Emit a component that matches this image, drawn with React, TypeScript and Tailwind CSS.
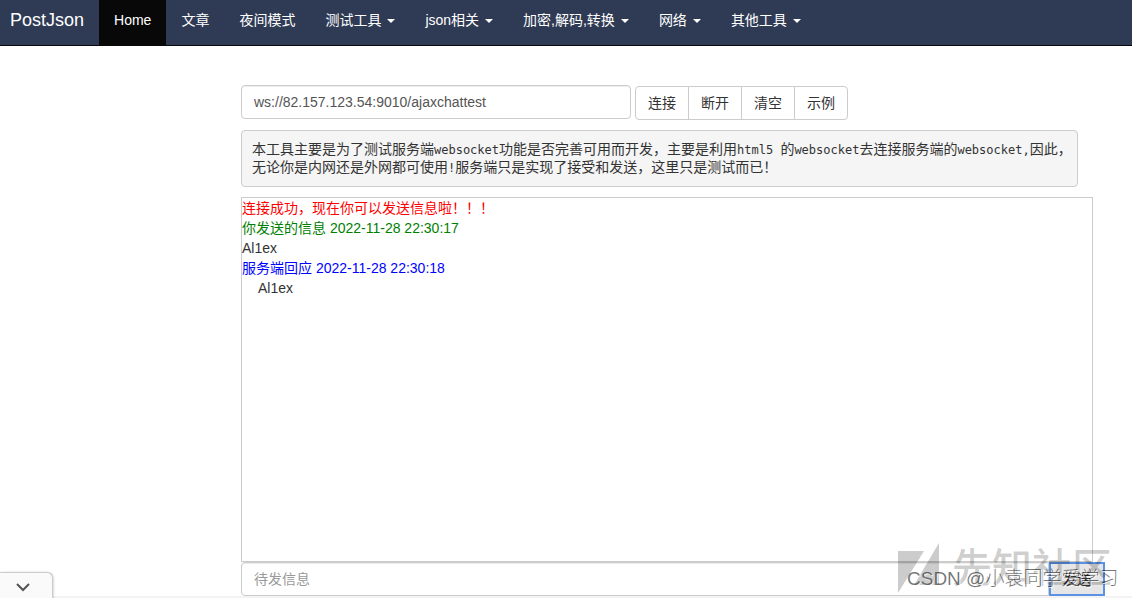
import { useState } from "react";

const MENU = [
  { label: "Home", active: true },
  { label: "文章" },
  { label: "夜间模式" },
  { label: "测试工具", caret: true },
  { label: "json相关", caret: true },
  { label: "加密,解码,转换", caret: true },
  { label: "网络", caret: true },
  { label: "其他工具", caret: true },
];

const ACTIONS = ["连接", "断开", "清空", "示例"];

const INTRO = [
  "本工具主要是为了测试服务端websocket功能是否完善可用而开发，主要是利用html5 的websocket去连接服务端的websocket,因此，",
  "无论你是内网还是外网都可使用!服务端只是实现了接受和发送，这里只是测试而已！",
];

function Navbar() {
  return (
    <nav className="flex h-[46px] items-stretch border-b border-[#080808] bg-[#2f3b54] text-white">
      <a href="#" className="pt-[10px] pr-[15px] pl-[10px] text-lg leading-5">
        PostJson
      </a>
      <ul className="flex">
        {MENU.map((item) => (
          <li key={item.label}>
            <a
              href="#"
              className={
                item.active
                  ? "flex h-full bg-[#080808] px-[15px] pt-[10px] leading-5"
                  : "flex h-full px-[15px] pt-[10px] leading-5"
              }
            >
              {item.label}
              {item.caret && (
                <span className="mt-[9px] ml-[6px] h-0 w-0 border-x-4 border-t-4 border-x-transparent border-t-white" />
              )}
            </a>
          </li>
        ))}
      </ul>
    </nav>
  );
}

// Latin words are set smaller so that two letters take one CJK cell
function Mono({ text }: { text: string }) {
  return (
    <>
      {text.split(/([\x20-\x7e]+)/).map((part, i) =>
        i % 2 ? (
          <span key={i} className="text-xs">
            {part}
          </span>
        ) : (
          part
        )
      )}
    </>
  );
}

function Watermark() {
  return (
    <div className="pointer-events-none absolute right-[13px] bottom-0 h-[56px] w-[222px]" aria-hidden="true">
      <div className="absolute top-0 left-0 flex items-start text-black/20">
        <svg width="43" height="52" viewBox="0 0 43 52" fill="currentColor">
          <path d="M1 9H27L1 51Z" />
          <path d="M42 1V43H17Z" />
        </svg>
        <span className="ml-3 text-[40px] leading-[52px] font-medium">先知社区</span>
      </div>
      <p className="absolute top-[25px] left-[10px] text-[19px] leading-6 font-light whitespace-nowrap text-black/55 [text-shadow:1px_1px_0_rgba(255,255,255,0.8)]">
        CSDN @小袁同学爱学习
      </p>
    </div>
  );
}

export default function App() {
  const [url, setUrl] = useState("ws://82.157.123.54:9010/ajaxchattest");
  const [message, setMessage] = useState("");

  return (
    <div className="relative flex min-h-screen flex-col bg-white font-['Liberation_Sans','Noto_Sans_CJK_SC',sans-serif] text-sm leading-5 text-[#333333]">
      <Navbar />

      <main className="flex flex-1 flex-col pt-[39px] pr-[39px] pb-[2px] pl-[241px]">
        <div className="flex h-[35px] gap-1">
          <input
            type="text"
            aria-label="WebSocket"
            value={url}
            onChange={(e) => setUrl(e.target.value)}
            className="h-[34px] w-[390px] rounded border border-[#cccccc] px-3 text-[#555555] shadow-[inset_0_1px_1px_rgba(0,0,0,0.075)]"
          />
          <div className="flex self-end">
            {ACTIONS.map((label) => (
              <button
                key={label}
                type="button"
                className="-ml-px h-[34px] border border-[#cccccc] bg-white px-3 first:ml-0 first:rounded-l last:rounded-r"
              >
                {label}
              </button>
            ))}
          </div>
        </div>

        <div className="mt-[10px] mr-[15px] rounded border border-[#cccccc] bg-[#f5f5f5] px-[10px] pt-[9px] pb-[10px] font-['DejaVu_Sans_Mono','Noto_Sans_CJK_SC',monospace] leading-[18px]">
          {INTRO.map((line) => (
            <p key={line} className="whitespace-nowrap">
              <Mono text={line} />
            </p>
          ))}
        </div>

        <div className="mt-[10px] flex-1 border border-[#cccccc]">
          <p className="text-[#ff0000]">连接成功，现在你可以发送信息啦！！！</p>
          <p className="text-[#008000]">你发送的信息 2022-11-28 22:30:17</p>
          <p>Al1ex</p>
          <p className="text-[#0000ff]">服务端回应 2022-11-28 22:30:18</p>
          <p className="pl-4">Al1ex</p>
        </div>

        <form className="-mr-3 flex" onSubmit={(e) => e.preventDefault()}>
          <input
            type="text"
            aria-label="待发信息"
            placeholder="待发信息"
            value={message}
            onChange={(e) => setMessage(e.target.value)}
            className="h-[34px] min-w-0 flex-1 rounded-l border border-[#cccccc] px-3 placeholder:text-[#999999] shadow-[inset_0_1px_1px_rgba(0,0,0,0.075)]"
          />
          <button type="submit" className="h-[34px] w-14 border-2 border-[#5b92e5] bg-[#e6e6e6]">
            发送
          </button>
        </form>
      </main>

      <div className="absolute inset-x-0 bottom-0 h-[2px] bg-[#f3f3f3]" />
      <button
        type="button"
        aria-label="展开"
        className="absolute bottom-0 left-0 flex h-[26px] w-[53px] items-end rounded-tr-md border-t border-r border-[#cccccc] bg-[#fafafa] pb-[6px] pl-4 shadow-[1px_0_2px_rgba(0,0,0,0.15)]"
      >
        <svg width="14" height="9" viewBox="0 0 14 9" fill="none" stroke="#555555" strokeWidth="2">
          <path d="M1 1L7 7L13 1" />
        </svg>
      </button>
      <Watermark />
    </div>
  );
}
